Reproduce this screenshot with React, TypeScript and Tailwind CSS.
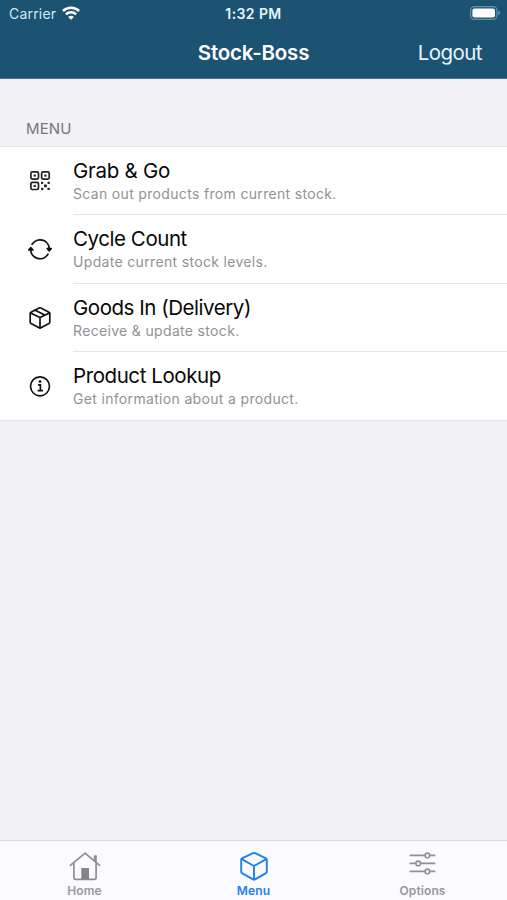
import React from 'react';

function WifiIcon() {
  return (
    <svg width="18" height="14" viewBox="0 0 18 14" fill="none" stroke="white" strokeWidth="2.5" className="-mt-[2px]">
      <path d="M0.9 5C5.4 0.6 12.6 0.6 17.1 5" />
      <path d="M3.9 8.4C6.8 5.6 11.2 5.6 14.1 8.4" />
      <path d="M9 13.8L6.1 10.9C7.7 9.5 10.3 9.5 11.9 10.9Z" fill="white" stroke="none" />
    </svg>
  );
}

function BatteryIcon() {
  return (
    <svg width="31" height="14" viewBox="0 0 31 14" fill="none" className="-mt-px">
      <rect x="0.6" y="0.6" width="26.3" height="12.8" rx="3.6" stroke="white" strokeOpacity="0.35" strokeWidth="1.2" />
      <rect x="2.4" y="2.4" width="22.6" height="9.2" rx="2" fill="white" />
      <path d="M28.3 4.8C30.4 5.3 30.4 8.7 28.3 9.2Z" fill="white" fillOpacity="0.45" />
    </svg>
  );
}

function QrIcon() {
  return (
    <svg width="24" height="24" viewBox="0 0 24 24" fill="none" stroke="#222" strokeWidth="1.7">
      <rect x="2.9" y="2.9" width="7.6" height="7.2" rx="1.5" />
      <rect x="13.6" y="2.9" width="7.6" height="7.2" rx="1.5" />
      <rect x="2.9" y="13.3" width="7.6" height="7.2" rx="1.5" />
      <g fill="#222" stroke="none">
        <rect x="5.6" y="5.5" width="2.2" height="2.1" />
        <rect x="16.3" y="5.5" width="2.2" height="2.1" />
        <rect x="5.6" y="15.9" width="2.2" height="2.1" />
        <rect x="13" y="12.7" width="2.3" height="2.3" rx="0.4" />
        <rect x="19.5" y="12.7" width="2.3" height="2.3" rx="0.4" />
        <rect x="16" y="15.5" width="2.9" height="2.7" rx="0.4" />
        <rect x="13" y="18.8" width="2.3" height="2.3" rx="0.4" />
        <rect x="19.5" y="18.8" width="2.3" height="2.3" rx="0.4" />
      </g>
    </svg>
  );
}

function CycleIcon() {
  return (
    <svg width="24" height="24" viewBox="0 0 24 24" fill="none" stroke="#111" strokeWidth="1.8" strokeLinecap="round">
      <path d="M4.1 7.3A9.3 9.3 0 0 1 21.3 12" />
      <path d="M19.9 17.3A9.3 9.3 0 0 1 2.7 12.2" />
      <path d="M19.1 11.5H23.4L21.3 14Z" fill="#111" strokeWidth="1.5" strokeLinejoin="round" />
      <path d="M0.7 13H5L2.8 10.5Z" fill="#111" strokeWidth="1.5" strokeLinejoin="round" />
    </svg>
  );
}

function PackageIcon() {
  return (
    <svg width="24" height="24" viewBox="0 0 24 24" fill="none" stroke="#111" strokeWidth="1.7" strokeLinejoin="round" strokeLinecap="round">
      <path d="M11.1 2.1Q12 1.6 12.9 2.1L21 6.2Q21.8 6.7 21.8 7.6V16Q21.8 17 21 17.5L12.9 21.8Q12 22.3 11.1 21.8L3 17.5Q2.2 17 2.2 16V7.6Q2.2 6.7 3 6.2Z" />
      <path d="M2.6 6.9L12 11.6L21.4 6.9M12 11.6V22" />
      <path d="M7.2 4.2L16.6 9.1" />
    </svg>
  );
}

function InfoIcon() {
  return (
    <svg width="24" height="24" viewBox="0 0 24 24" fill="none" stroke="#111" strokeWidth="1.7">
      <circle cx="12" cy="12.3" r="9.5" />
      <circle cx="12" cy="7.6" r="1.4" fill="#111" stroke="none" />
      <path d="M10 10.9H12.4V16.7M9.6 16.7H15" strokeWidth="1.7" />
    </svg>
  );
}

function HomeIcon() {
  return (
    <svg width="32" height="30" viewBox="0 0 32 30" fill="none" stroke="#8f8f93" strokeWidth="1.7">
      <path d="M1.4 14.3L16 2.2L30.6 14.3" strokeLinecap="round" strokeLinejoin="round" />
      <path d="M4.9 11.8V26.6Q4.9 28.3 6.6 28.3H25.4Q27.1 28.3 27.1 26.6V11.8" />
      <path d="M25.2 4.7H27.4V11.6L25.2 9.8Z" fill="#8f8f93" strokeWidth="0.8" />
      <rect x="12.3" y="17" width="7.7" height="11.3" fill="#858589" stroke="none" />
    </svg>
  );
}

function CubeIcon() {
  return (
    <svg width="30" height="30" viewBox="0 0 30 30" fill="none" stroke="#1b80f0" strokeWidth="1.9" strokeLinejoin="round" strokeLinecap="round">
      <path d="M14 2.2Q15 1.7 16 2.2L26.6 7.2Q27.8 7.8 27.8 9.1V20.4Q27.8 21.7 26.6 22.4L16 28.4Q15 28.9 14 28.4L3.4 22.4Q2.2 21.7 2.2 20.4V9.1Q2.2 7.8 3.4 7.2Z" />
      <path d="M2.8 8.2L15 15L27.2 8.2M15 15V28.4" />
    </svg>
  );
}

function OptionsIcon() {
  return (
    <svg width="30" height="30" viewBox="0 0 30 30" fill="none" stroke="#919195" strokeWidth="1.8" strokeLinecap="round">
      <path d="M2.4 4.4H26.6M2.4 12.4H26.6M2.4 20.4H26.6" />
      <circle cx="19.4" cy="4.4" r="2.3" fill="#fafaff" strokeWidth="1.6" />
      <circle cx="10.2" cy="12.4" r="2.3" fill="#fafaff" strokeWidth="1.6" />
      <circle cx="19.4" cy="20.4" r="2.3" fill="#fafaff" strokeWidth="1.6" />
    </svg>
  );
}

const menuItems = [
  { title: 'Grab & Go', description: 'Scan out products from current stock.', icon: QrIcon, spacing: 'tracking-[-0.25px]' },
  { title: 'Cycle Count', description: 'Update current stock levels.', icon: CycleIcon, spacing: 'tracking-[-0.44px]' },
  { title: 'Goods In (Delivery)', description: 'Receive & update stock.', icon: PackageIcon, spacing: 'tracking-[-0.46px]' },
  { title: 'Product Lookup', description: 'Get information about a product.', icon: InfoIcon, spacing: 'tracking-[-0.42px]' },
];

const tabs = [
  { label: 'Home', icon: HomeIcon, color: 'text-[#98989c]' },
  { label: 'Menu', icon: CubeIcon, color: 'text-[#1b80f0]' },
  { label: 'Options', icon: OptionsIcon, color: 'text-[#98989c]' },
];

export default function App() {
  return (
    <div className="flex h-[900px] w-[507px] flex-col overflow-hidden bg-[#f1f1f6] font-['Inter','Liberation_Sans',sans-serif]">
      <header className="h-[79px] shrink-0 border-b border-[#477490] bg-[#1c5373] text-white">
        <div className="grid h-[27px] grid-cols-3 items-center">
          <div className="flex items-center gap-[6px] pl-[9px]">
            <span className="text-[14px] leading-[27px] tracking-[0.2px] text-[#d5e8f2]">Carrier</span>
            <WifiIcon />
          </div>
          <span className="pt-px text-center text-[14px] font-semibold leading-[26px] tracking-[0.4px] text-[#e9f5fb]">1:32 PM</span>
          <div className="flex justify-end pr-[6px]">
            <BatteryIcon />
          </div>
        </div>
        <div className="grid h-[51px] grid-cols-3 items-center pt-[2px]">
          <h1 className="col-start-2 whitespace-nowrap text-center text-[20.5px] font-semibold tracking-[-0.2px]">Stock-Boss</h1>
          <button className="pr-[25px] text-right text-[20.5px] tracking-[-0.55px] text-[#e6f4fc]">Logout</button>
        </div>
      </header>

      <main className="flex-1">
        <h2 className="h-[68px] pl-[26px] pt-[40px] text-[15px] leading-[20px] tracking-[0.15px] text-[#77777b]">MENU</h2>
        <ul className="-mt-px border-y border-[#e4e4e8] bg-white">
          {menuItems.map(({ title, description, icon: Icon, spacing }, i) => (
            <li key={title} className="flex h-[68.25px]">
              <div className="flex w-[73px] shrink-0 items-center pl-[28px]">
                <Icon />
              </div>
              <div className={`flex-1 pt-[11px] ${i < menuItems.length - 1 ? 'border-b border-[#e6e6e8]' : ''}`}>
                <div className={`text-[20.5px] leading-[26px] text-[#080808] ${spacing}`}>{title}</div>
                <div className="text-[14px] leading-[20px] tracking-[0.33px] text-[#929296]">{description}</div>
              </div>
            </li>
          ))}
        </ul>
      </main>

      <nav className="grid h-[60px] shrink-0 grid-cols-3 border-t border-[#d5d5da] bg-[#fafaff]">
        {tabs.map(({ label, icon: Icon, color }) => (
          <button key={label} className={`flex flex-col items-center pt-[10px] ${color}`}>
            <Icon />
            <span className="mt-[2px] text-[12px] font-semibold leading-[16px] tracking-[0.1px]">{label}</span>
          </button>
        ))}
      </nav>
    </div>
  );
}
